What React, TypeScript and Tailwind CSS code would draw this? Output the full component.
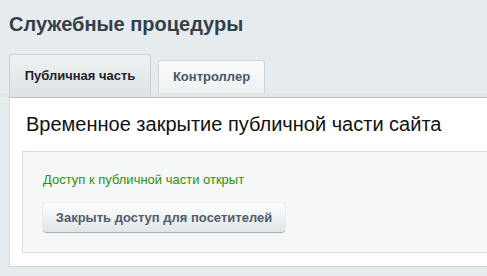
import React from 'react';

export default function App() {
  return (
    <div className="w-[487px] h-[276px] overflow-hidden bg-[#e6ecee] font-['Liberation_Sans',Arial,sans-serif]">
      <h1 className="pt-[12px] pl-[9px] text-[20px] leading-[24px] font-bold text-[#353f47]">
        Служебные процедуры
      </h1>

      <div className="mt-[18px] flex items-end pl-[9px] bg-[linear-gradient(to_top,#e0e7e9_4px,transparent_4px)]">
        <div className="w-[142px] h-[43px] flex items-center justify-center rounded-t-[3px] border border-b-0 border-[#c9d2d5] bg-[linear-gradient(to_bottom,#eff2f3,#dbe2e4)] text-[13px] font-bold text-[#1f2329]">
          Публичная часть
        </div>
        <div className="ml-[7px] mb-[4px] w-[107px] h-[33px] flex items-center justify-center rounded-t-[3px] border border-b-0 border-[#d0d7da] bg-[linear-gradient(to_bottom,#fafbfb,#eef1f2)] text-[13px] font-bold text-[#465767]">
          Контроллер
        </div>
      </div>

      <div className="ml-[9px] w-[500px] h-[169px] bg-white border-t border-[#b9c3c7] border-l border-l-[#d6dde0] shadow-[0_1px_1px_rgba(0,0,0,0.08)] pt-[14px]">
        <h2 className="pl-[16px] text-[20px] leading-[24px] font-normal text-[#111]">
          Временное закрытие публичной части сайта
        </h2>
        <div className="ml-[12px] mt-[15px] h-[102px] border border-[#d6dee1] bg-[#f5f7f8] pl-[20px] pt-[20px]">
          <div className="text-[13px] leading-[16px] text-[#2f9200]">
            Доступ к публичной части открыт
          </div>
          <button className="mt-[15px] h-[29px] w-[242px] rounded-[4px] bg-[linear-gradient(to_bottom,#ffffff,#dfe5e7)] shadow-[0_1px_1px_rgba(0,0,0,0.3),0_0_1px_rgba(0,0,0,0.25)] text-[13px] font-bold text-[#535c69]">
            Закрыть доступ для посетителей
          </button>
        </div>
      </div>
    </div>
  );
}
